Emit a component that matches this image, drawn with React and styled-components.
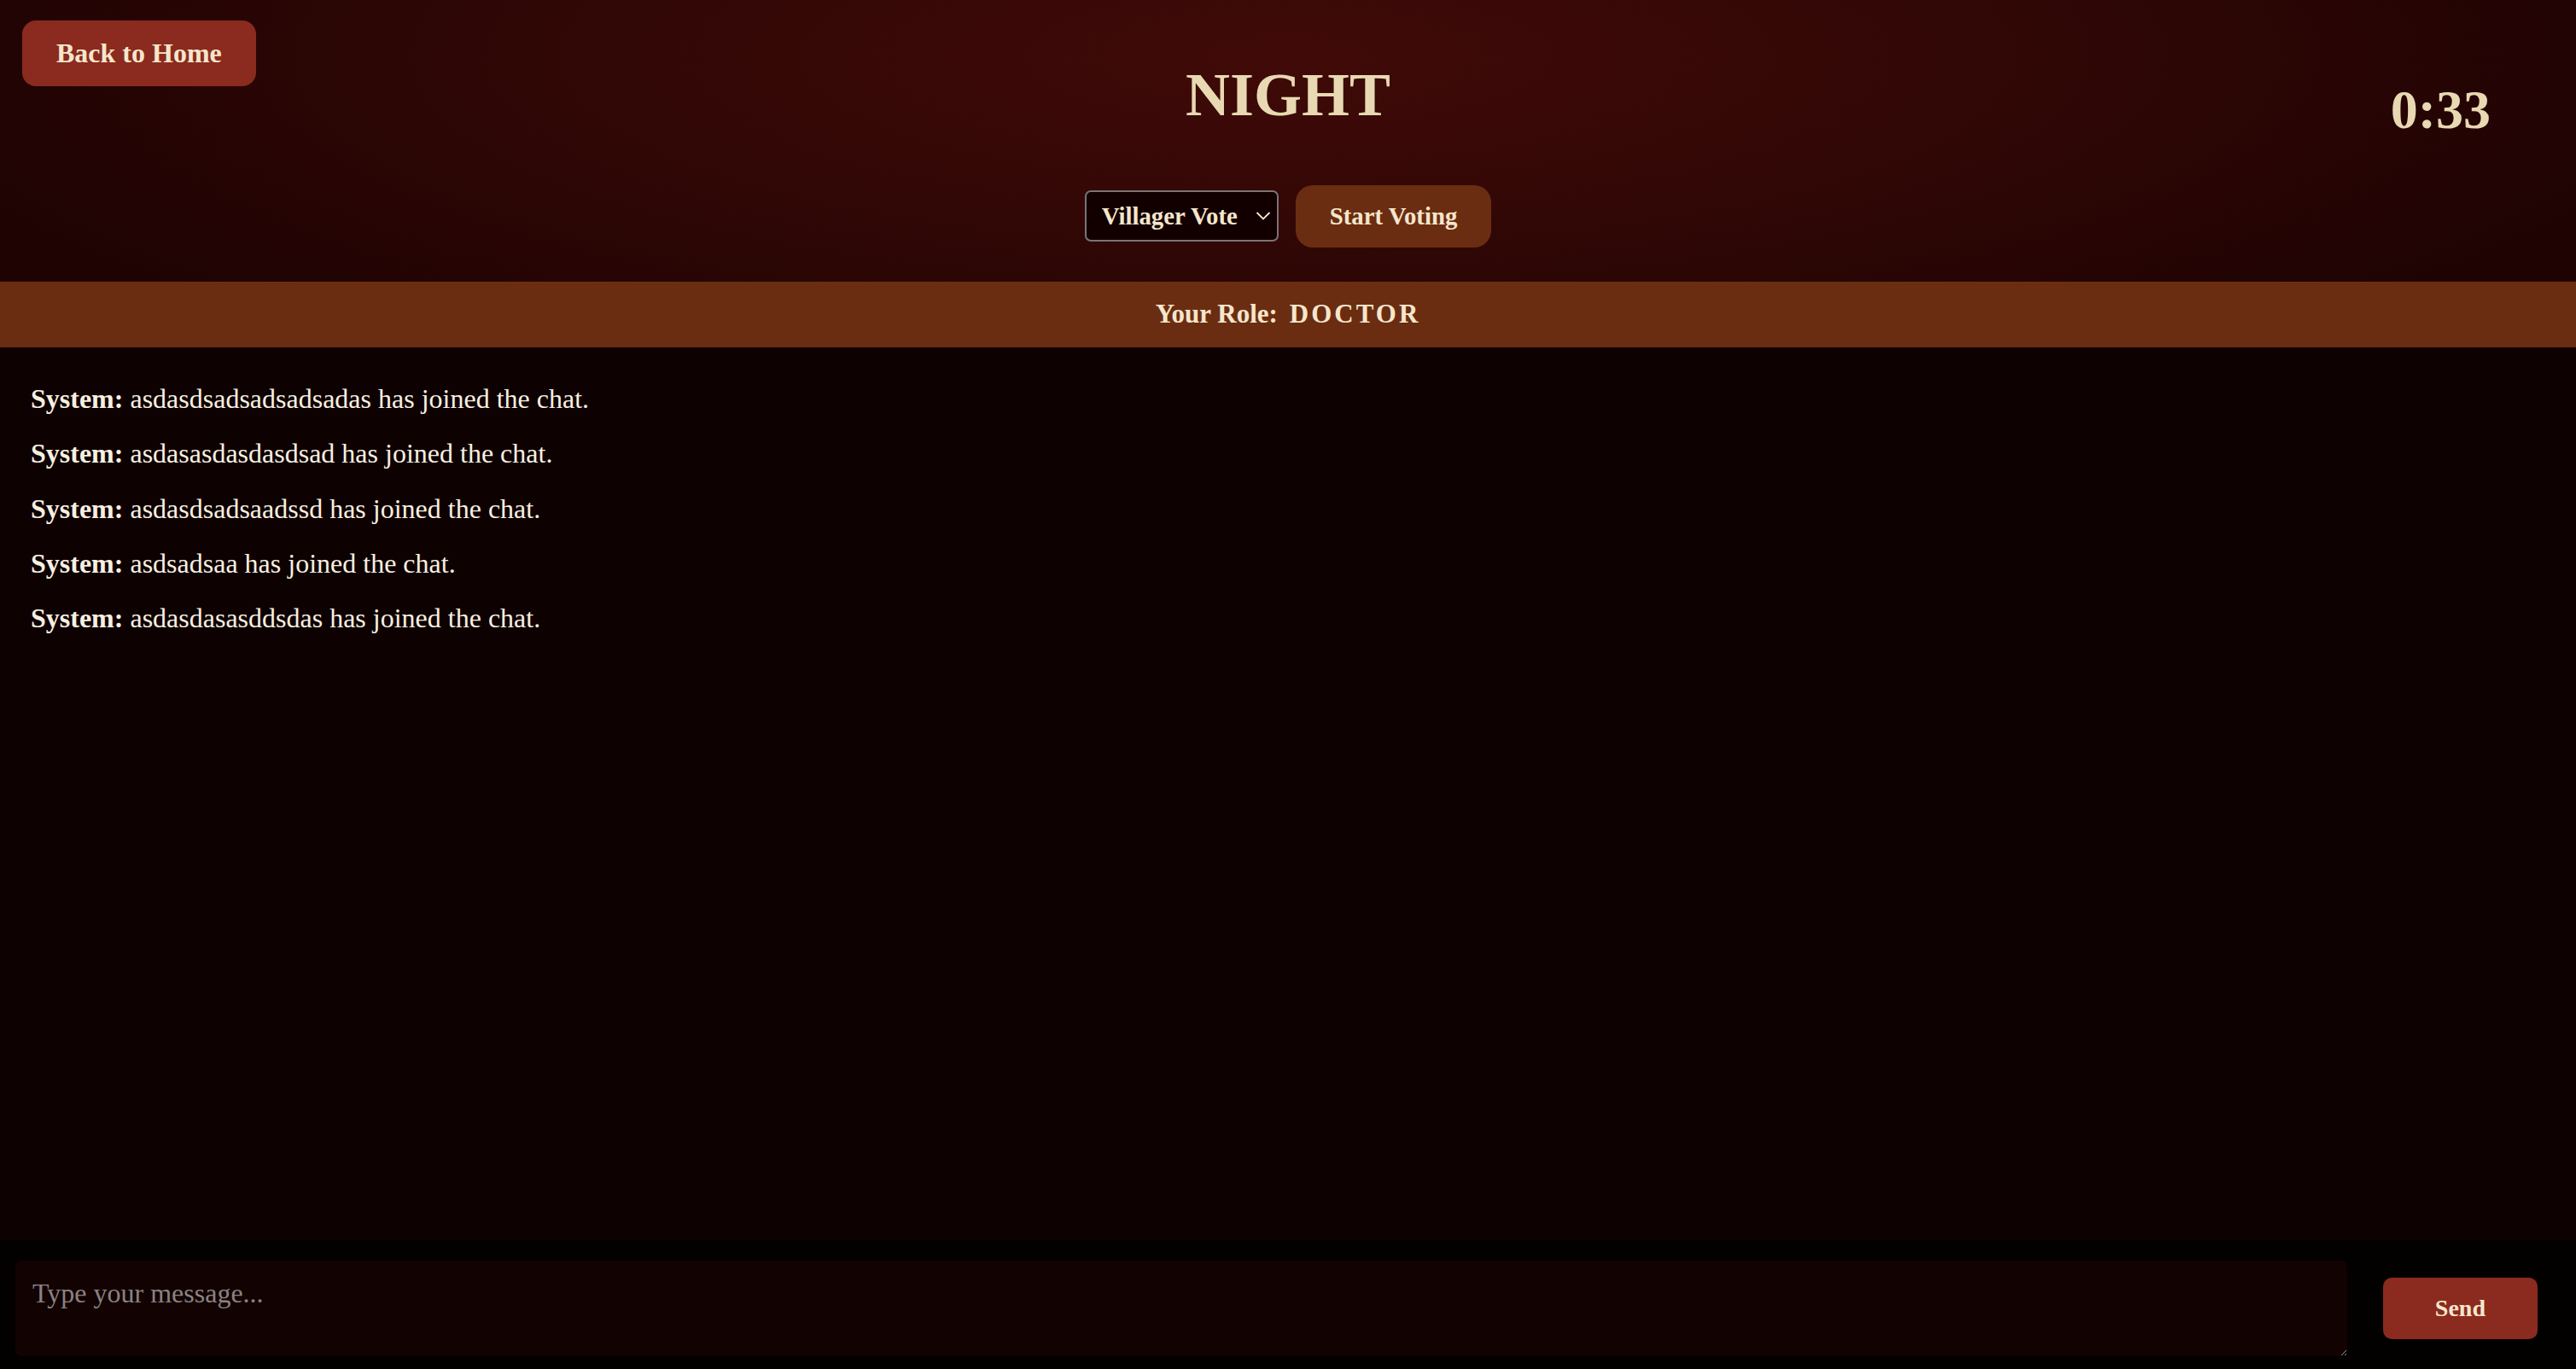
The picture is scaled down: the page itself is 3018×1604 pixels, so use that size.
import React from "react";
import styled, { createGlobalStyle } from "styled-components";

const GlobalStyle = createGlobalStyle`
  html, body {
    margin: 0;
    padding: 0;
    background: #0e0101;
  }
  body {
    font-family: "Liberation Serif", "Times New Roman", serif;
  }
  * { box-sizing: border-box; }
`;

const Page = styled.div`
  display: flex;
  flex-direction: column;
  width: 100%;
  height: 1604px;
  background: #0e0101;
  color: #f5ecdc;
`;

const Header = styled.header`
  display: grid;
  grid-template-columns: 1fr auto 1fr;
  padding: 24px 26px 40px 26px;
  background: radial-gradient(ellipse 55% 130% at 50% 20%, #400a08 0%, #340806 40%, #1f0303 100%);
`;

const PillButton = styled.button`
  border: none;
  cursor: pointer;
  font-family: "Liberation Serif", "Times New Roman", serif;
  font-weight: 700;
  color: #f5e6cc;
  background: ${(p) => p.$bg};
  font-size: ${(p) => p.$size}px;
  line-height: 1.15;
  padding: 20px ${(p) => p.$padX}px;
  border-radius: ${(p) => p.$radius}px;
`;

const LeftCell = styled.div`
  display: flex;
  align-items: flex-start;
`;

const CenterCell = styled.div`
  display: flex;
  flex-direction: column;
  align-items: center;
  padding-top: 46px;
`;

const Title = styled.h1`
  margin: 0;
  font-size: 72px;
  line-height: 1.15;
  font-weight: 700;
  color: #e8d9b2;
  letter-spacing: 0;
`;

const Controls = styled.div`
  display: flex;
  align-items: center;
  gap: 20px;
  margin-top: 64px;
`;

const SelectWrap = styled.div`
  position: relative;
  display: inline-flex;
`;

const Select = styled.select`
  appearance: none;
  -webkit-appearance: none;
  height: 60px;
  padding: 0 44px 0 18px;
  background: #120000;
  border: 2px solid #7a7474;
  border-radius: 7px;
  color: #f5e6cc;
  font-family: "Liberation Serif", "Times New Roman", serif;
  font-weight: 700;
  font-size: 28.8px;
  outline: none;
`;

const Chevron = styled.svg`
  position: absolute;
  right: 9px;
  top: 50%;
  transform: translateY(-50%);
  pointer-events: none;
`;

const RightCell = styled.div`
  display: flex;
  justify-content: flex-end;
  align-items: flex-start;
  padding-top: 68px;
  padding-right: 74px;
`;

const Timer = styled.div`
  font-size: 64px;
  line-height: 1.15;
  font-weight: 700;
  color: #e8d9b2;
`;

const RoleBar = styled.div`
  display: flex;
  justify-content: center;
  align-items: center;
  height: 77px;
  background: #6b2d11;
  color: #f5e6cc;
  font-size: 31px;
  font-weight: 700;
`;

const RoleName = styled.span`
  margin-left: 14px;
  letter-spacing: 3px;
`;

const Chat = styled.div`
  flex: 1;
  display: flex;
  flex-direction: column;
  gap: 27.5px;
  padding: 42px 36px;
  background: #0e0101;
  overflow: hidden;
`;

const Message = styled.div`
  font-size: 32px;
  line-height: 1.15;
  color: #f8efe0;
`;

const Sender = styled.strong`
  font-weight: 700;
  margin-right: 8px;
`;

const InputBar = styled.div`
  display: flex;
  align-items: center;
  gap: 42px;
  height: 151px;
  padding: 24px 45px 15px 18px;
  background: #030000;
`;

const TextArea = styled.textarea`
  flex: 1;
  height: 112px;
  padding: 20px;
  background: #130202;
  border: none;
  border-radius: 7px;
  color: #f5ecdc;
  font-family: "Liberation Serif", "Times New Roman", serif;
  font-size: 32px;
  line-height: 1.15;
  outline: none;
  resize: vertical;
  &::placeholder {
    color: #8a8282;
  }
`;

const messages = [
  "asdasdsadsadsadsadas",
  "asdasasdasdasdsad",
  "asdasdsadsaadssd",
  "asdsadsaa",
  "asdasdasasddsdas",
];

export default function App() {
  return (
    <>
      <GlobalStyle />
      <Page>
        <Header>
          <LeftCell>
            <PillButton $bg="#8b2a1e" $size={32} $padX={40} $radius={16}>
              Back to Home
            </PillButton>
          </LeftCell>
          <CenterCell>
            <Title>NIGHT</Title>
            <Controls>
              <SelectWrap>
                <Select defaultValue="villager">
                  <option value="villager">Villager Vote</option>
                  <option value="mafia">Mafia Vote</option>
                </Select>
                <Chevron width="18" height="11" viewBox="0 0 18 11" fill="none">
                  <path d="M1.5 1.5 L9 9 L16.5 1.5" stroke="#f5e6cc" strokeWidth="1.8" />
                </Chevron>
              </SelectWrap>
              <PillButton $bg="#6b2d11" $size={28.8} $padX={40} $radius={20}>
                Start Voting
              </PillButton>
            </Controls>
          </CenterCell>
          <RightCell>
            <Timer>0:33</Timer>
          </RightCell>
        </Header>
        <RoleBar>
          Your Role:<RoleName>DOCTOR</RoleName>
        </RoleBar>
        <Chat>
          {messages.map((m) => (
            <Message key={m}>
              <Sender>System:</Sender>
              {m} has joined the chat.
            </Message>
          ))}
        </Chat>
        <InputBar>
          <TextArea placeholder="Type your message..." />
          <PillButton $bg="#8b2a1e" $size={28} $padX={61} $radius={10}>
            Send
          </PillButton>
        </InputBar>
      </Page>
    </>
  );
}
